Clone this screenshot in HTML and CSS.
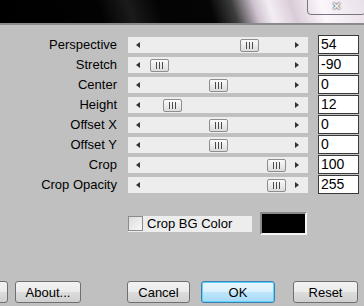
FILE: index.html
```html
<!DOCTYPE html>
<html lang="en">
<head>
    <meta charset="UTF-8">
    <title>Perspective</title>
    <link rel="stylesheet" href="styles.css">
</head>
<body>
    <div class="titlebar">
        <div class="close-btn">&#x2715;</div>
    </div>

    <div class="params">
        <label class="param-label">Perspective</label>
        <div class="track"><span class="arrow-left"></span><span class="rail"><span class="thumb" style="left: 96px"></span></span><span class="arrow-right"></span></div>
        <div class="value">54</div>

        <label class="param-label">Stretch</label>
        <div class="track"><span class="arrow-left"></span><span class="rail"><span class="thumb" style="left: 6px"></span></span><span class="arrow-right"></span></div>
        <div class="value">-90</div>

        <label class="param-label">Center</label>
        <div class="track"><span class="arrow-left"></span><span class="rail"><span class="thumb" style="left: 65px"></span></span><span class="arrow-right"></span></div>
        <div class="value">0</div>

        <label class="param-label">Height</label>
        <div class="track"><span class="arrow-left"></span><span class="rail"><span class="thumb" style="left: 19px"></span></span><span class="arrow-right"></span></div>
        <div class="value">12</div>

        <label class="param-label">Offset X</label>
        <div class="track"><span class="arrow-left"></span><span class="rail"><span class="thumb" style="left: 65px"></span></span><span class="arrow-right"></span></div>
        <div class="value">0</div>

        <label class="param-label">Offset Y</label>
        <div class="track"><span class="arrow-left"></span><span class="rail"><span class="thumb" style="left: 65px"></span></span><span class="arrow-right"></span></div>
        <div class="value">0</div>

        <label class="param-label">Crop</label>
        <div class="track"><span class="arrow-left"></span><span class="rail"><span class="thumb" style="left: 123px"></span></span><span class="arrow-right"></span></div>
        <div class="value">100</div>

        <label class="param-label">Crop Opacity</label>
        <div class="track"><span class="arrow-left"></span><span class="rail"><span class="thumb" style="left: 123px"></span></span><span class="arrow-right"></span></div>
        <div class="value">255</div>
    </div>

    <div class="bg-row">
        <label class="check">
            <span class="check-box"></span>
            <span>Crop BG Color</span>
        </label>
        <div class="swatch"></div>
    </div>

    <div class="buttons">
        <button class="btn btn-cut"></button>
        <button class="btn btn-about">About...</button>
        <button class="btn btn-cancel">Cancel</button>
        <button class="btn btn-ok">OK</button>
        <button class="btn btn-reset">Reset</button>
    </div>
</body>
</html>
```

FILE: styles.css
```css
/* classic gray dialog */
:root {
    --dialog-bg: #c0c0c0;
    --track-bg: #ededed;
    --text-color: #000000;
    --border-dark: #3a3a3a;
}

body {
    margin: 0;
    width: 364px;
    height: 306px;
    overflow: hidden;
    background-color: var(--dialog-bg);
    color: var(--text-color);
    font-family: "Liberation Sans", Arial, sans-serif;
    font-size: 13px;
}

.titlebar {
    position: relative;
    height: 23px;
    border-bottom: 2px solid #8a8a8a;
    background:
        linear-gradient(72deg, transparent 0%, transparent 28%, rgba(70, 70, 70, 0.35) 36%, transparent 44%, transparent 100%),
        linear-gradient(72deg, #000 0%, #050505 58%, #3c3c3c 64%, #cfc3cf 70%, #f4eef4 74%, #d9ccd9 80%, #fbf7fb 88%, #e9dfe9 100%);
}

.close-btn {
    position: absolute;
    top: -1px;
    right: -2px;
    width: 57px;
    height: 14px;
    border: 1px solid #7a7480;
    border-radius: 0 0 4px 4px;
    color: #f2f2f2;
    font-size: 11px;
    font-weight: bold;
    line-height: 13px;
    text-align: center;
    text-shadow: 0 0 1px #333, 0 0 2px #555;
}

.params {
    display: grid;
    grid-template-columns: 117px 180px 40px;
    column-gap: 11px;
    row-gap: 0;
    padding-top: 10px;
}

.params .value {
    margin-left: -1px;
}

.param-label {
    height: 20px;
    line-height: 20px;
    text-align: right;
    white-space: nowrap;
}

.track {
    display: flex;
    align-items: center;
    height: 16px;
    margin-top: 2px;
    background-color: var(--track-bg);
}

.arrow-left,
.arrow-right {
    width: 0;
    height: 0;
    border-top: 3px solid transparent;
    border-bottom: 3px solid transparent;
}

.arrow-left {
    margin-left: 8px;
    margin-right: 4px;
    border-right: 4px solid #333;
}

.arrow-right {
    margin-left: 4px;
    margin-right: 9px;
    border-left: 4px solid #333;
}

.rail {
    position: relative;
    flex: 1;
    height: 16px;
}

.thumb {
    position: absolute;
    top: 2px;
    width: 17px;
    height: 11px;
    border: 1px solid #8e8e8e;
    border-radius: 2px;
    background: linear-gradient(#fafafa, #dcdcdc);
    display: flex;
    align-items: center;
    justify-content: center;
}

.thumb::before {
    content: "";
    width: 7px;
    height: 7px;
    background: repeating-linear-gradient(to right, #4a4a4a 0 1px, transparent 1px 3px);
}

.value {
    box-sizing: border-box;
    height: 19px;
    margin-top: 0;
    margin-bottom: 1px;
    padding-left: 2px;
    border: 1px solid var(--border-dark);
    background-color: #ffffff;
    font-size: 14px;
    line-height: 17px;
}

.bg-row {
    display: flex;
    align-items: center;
    margin-top: 17px;
    padding-left: 128px;
}

.check {
    display: flex;
    align-items: center;
    gap: 4px;
    width: 124px;
    height: 16px;
    background-color: var(--track-bg);
}

.check-box {
    box-sizing: border-box;
    width: 15px;
    height: 15px;
    border: 1px solid #8c8c8c;
    background: linear-gradient(135deg, #dcdcdc, #f8f8f8);
}

.swatch {
    box-sizing: border-box;
    width: 47px;
    height: 23px;
    margin-left: 8px;
    border: 2px solid;
    border-color: #8a8a8a #f4f4f4 #f4f4f4 #8a8a8a;
    background-color: #000000;
}

.buttons {
    display: flex;
    margin-top: 46px;
}

.btn {
    box-sizing: border-box;
    height: 22px;
    padding: 0;
    border: 1px solid #707070;
    border-radius: 3px;
    background: linear-gradient(#f2f2f2 0%, #ebebeb 50%, #dddddd 51%, #cfcfcf 100%);
    color: #000;
    font-family: "Liberation Sans", Arial, sans-serif;
    font-size: 13px;
}

.btn-cut {
    width: 66px;
    margin-left: -58px;
}

.btn-about {
    width: 66px;
    margin-left: 7px;
}

.btn-cancel {
    width: 63px;
    margin-left: 46px;
}

.btn-ok {
    width: 74px;
    margin-left: 11px;
    border-color: #3c7fb1;
    background: linear-gradient(#eaf6fd 0%, #d9f0fc 50%, #bee6fd 51%, #a7d9f5 100%);
    box-shadow: inset 0 0 0 1px #5fd3ff;
}

.btn-reset {
    width: 65px;
    margin-left: 18px;
}
```
